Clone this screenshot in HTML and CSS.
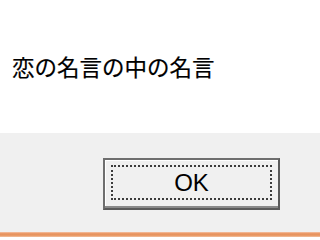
FILE: index.html
```html
<!DOCTYPE html>
<html lang="ja">
<head>
<meta charset="utf-8">
<link rel="stylesheet" href="styles.css">
</head>
<body>
<div class="dialog">
  <div class="content">
    <p class="msg">恋の名言の中の名言</p>
  </div>
  <div class="footer">
    <div class="ok"><span class="focus">OK</span></div>
  </div>
  <div class="edge"></div>
</div>
</body>
</html>
```
FILE: styles.css
```css
html, body {
  margin: 0;
  padding: 0;
  height: 240px;
  overflow: hidden;
  background: #ffffff;
}
.dialog {
  width: 100%;
  height: 240px;
  display: flex;
  flex-direction: column;
  overflow: hidden;
}
.content {
  height: 133px;
  background: #ffffff;
  padding: 0 0 0 12px;
  box-sizing: border-box;
}
.msg {
  margin: 0;
  padding-top: 52px;
  font-family: "Noto Sans CJK JP", "Noto Sans", sans-serif;
  font-size: 22.5px;
  line-height: 28px;
  color: #000000;
  white-space: nowrap;
  -webkit-text-stroke: 0.2px #000000;
}
.footer {
  height: 99px;
  background: #f0f0f0;
  display: flex;
  padding: 25px 0 0 103px;
  box-sizing: border-box;
  overflow: hidden;
}
.ok {
  flex: none;
  width: 177px;
  height: 52px;
  box-sizing: border-box;
  border-top: 2px solid #6e6e6e;
  border-left: 2px solid #6e6e6e;
  border-bottom: 2px solid #5a5a5a;
  border-right: 2px solid #5a5a5a;
  box-shadow: inset 0 -2px 0 #8a8a8a, inset 1px 1px 0 #ffffff;
  background: #f0f0f0;
  padding: 5px 6px 8px 6px;
  display: flex;
}
.focus {
  flex: 1;
  border: 2px dotted #3c3c3c;
  display: flex;
  align-items: center;
  justify-content: center;
  font-family: "Liberation Sans", Arial, sans-serif;
  font-size: 24px;
  color: #000000;
  line-height: 1;
}
.edge {
  height: 5px;
  background: linear-gradient(#f5c3a5 0, #e8925e 35%, #e7955f 65%, #f3c2a2 100%);
  flex: none;
}
```
